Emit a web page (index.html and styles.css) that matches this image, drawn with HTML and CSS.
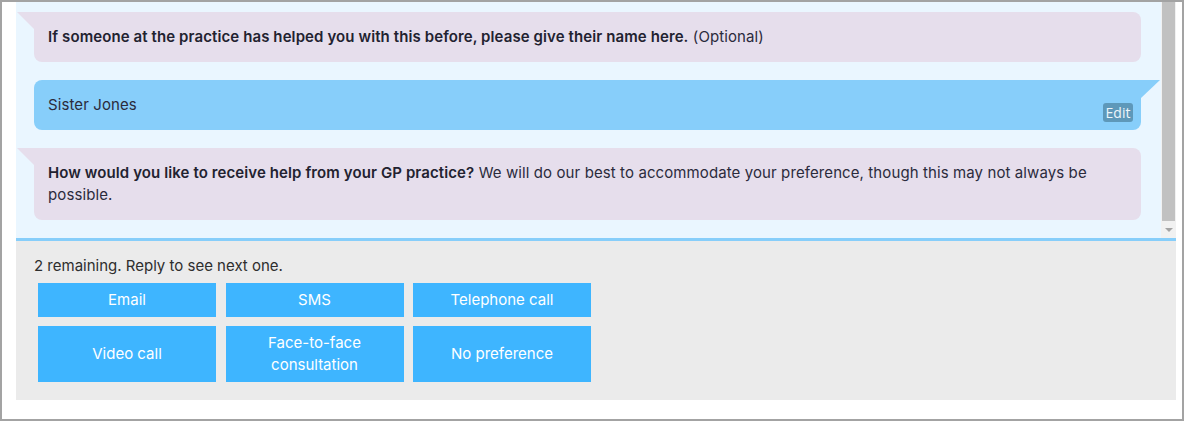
FILE: index.html
```html
<!DOCTYPE html>
<html lang="en">
<head>
<meta charset="utf-8">
<title>Chat</title>
<link rel="stylesheet" href="styles.css">
</head>
<body>
<div class="frame">
  <div class="chat">
    <div class="messages">
      <div class="bubble bot">
        <strong>If someone at the practice has helped you with this before, please give their name here.</strong> (Optional)
      </div>
      <div class="bubble user">
        Sister Jones
        <span class="edit">Edit</span>
      </div>
      <div class="bubble bot">
        <strong>How would you like to receive help from your GP practice?</strong> We will do our best to accommodate your preference, though this may not always be possible.
      </div>
    </div>
    <div class="scrollbar">
      <div class="thumb"></div>
      <div class="arrow"></div>
    </div>
  </div>
  <div class="footer">
    <div class="remaining">2 remaining. Reply to see next one.</div>
    <div class="options">
      <button class="opt">Email</button>
      <button class="opt">SMS</button>
      <button class="opt">Telephone call</button>
      <button class="opt">Video call</button>
      <button class="opt">Face-to-face<br>consultation</button>
      <button class="opt">No preference</button>
    </div>
  </div>
</div>
</body>
</html>
```
FILE: styles.css
```css
* { box-sizing: border-box; }
html, body { margin: 0; padding: 0; }
body {
  width: 1184px;
  height: 421px;
  background: #ffffff;
  font-family: "Inter", "Open Sans", sans-serif;
  font-size: 15px;
  color: #2b2b3c;
}
.frame {
  width: 1184px;
  height: 421px;
  border: 2px solid #a3a3a3;
  padding: 0 6px 19px 14px;
  display: flex;
  flex-direction: column;
}
.chat {
  height: 239px;
  background: #eaf6ff;
  border-bottom: 3px solid #87cefa;
  display: flex;
}
.messages {
  flex: 1;
  padding: 10px 20px 0 18px;
  display: flex;
  flex-direction: column;
  gap: 18px;
}
.bubble {
  position: relative;
  padding: 14px 14px;
  line-height: 22px;
  letter-spacing: 0.1px;
}
.bubble strong { font-weight: 600; color: #222230; }
.bot {
  background: #e6deec;
  border-radius: 0 8px 8px 8px;
}
.bot::before {
  content: "";
  position: absolute;
  left: -17px;
  top: 0;
  border-top: 17px solid #e6deec;
  border-left: 17px solid transparent;
}
.user {
  background: #87cefa;
  border-radius: 8px 0 8px 8px;
}
.user::after {
  content: "";
  position: absolute;
  right: -19px;
  top: 0;
  border-top: 18px solid #87cefa;
  border-right: 19px solid transparent;
}
.edit {
  position: absolute;
  right: 8px;
  bottom: 8px;
  width: 30px;
  height: 19px;
  background: #5e98b9;
  color: #eef6fb;
  border-radius: 3px;
  font-family: "Open Sans", sans-serif;
  font-size: 14px;
  line-height: 19px;
  letter-spacing: 0;
  text-align: center;
}
.scrollbar {
  width: 15px;
  background: #f1f1f1;
  display: flex;
  flex-direction: column;
  align-items: center;
}
.thumb {
  width: 13px;
  height: 219px;
  background: #c1c1c1;
}
.arrow {
  margin-top: 7px;
  width: 0;
  height: 0;
  border-top: 4px solid #a3a3a3;
  border-left: 4px solid transparent;
  border-right: 4px solid transparent;
}
.footer {
  flex: 1;
  background: #ebebeb;
  padding: 14px 0 0 18px;
}
.remaining {
  line-height: 22px;
  color: #2e2e2e;
}
.options {
  margin: 6px 0 0 4px;
  display: grid;
  grid-template-columns: repeat(3, 178px);
  column-gap: 9.5px;
  row-gap: 9px;
}
.opt {
  border: none;
  background: #3eb5ff;
  color: #ffffff;
  font-family: inherit;
  font-size: 15px;
  line-height: 22px;
  padding: 6px 10px;
}
.opt:nth-child(n+4) { height: 56px; }
```
